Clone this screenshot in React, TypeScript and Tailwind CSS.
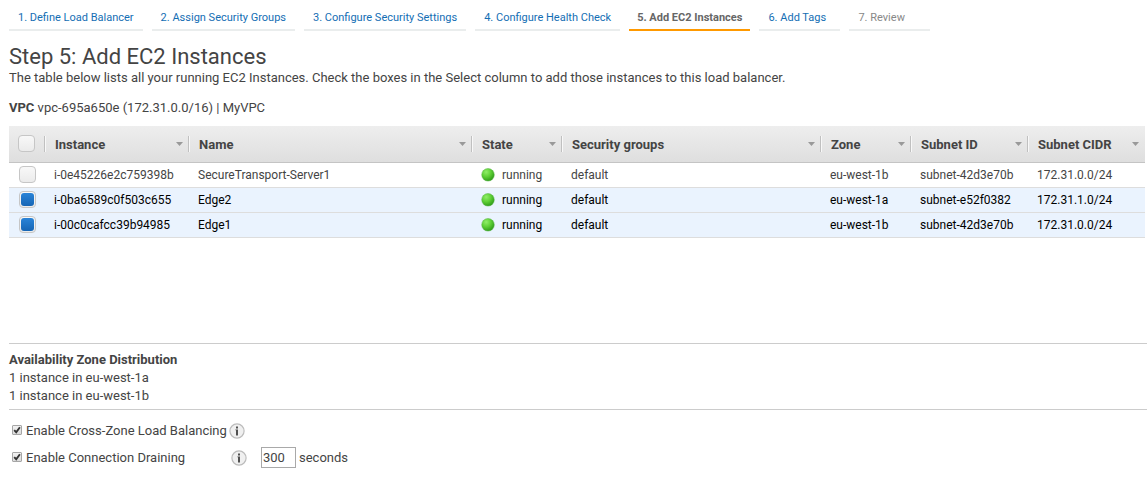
import { useId, useState } from "react";

const steps = [
  { label: "1. Define Load Balancer", state: "link" },
  { label: "2. Assign Security Groups", state: "link" },
  { label: "3. Configure Security Settings", state: "link" },
  { label: "4. Configure Health Check", state: "link" },
  { label: "5. Add EC2 Instances", state: "active" },
  { label: "6. Add Tags", state: "link" },
  { label: "7. Review", state: "pending" },
];

const stepStyles: Record<string, string> = {
  link: "border-[#eaeded] px-[9px] text-[#146eb4]",
  active: "border-[#ff9900] px-2 font-bold text-[#666666]",
  pending: "border-[#eaeded] px-[9px] text-[#888888]",
};

const columns = [
  { title: "Instance", width: "w-[144px]" },
  { title: "Name", width: "" },
  { title: "State", width: "w-[90px]" },
  { title: "Security groups", width: "w-[259px]" },
  { title: "Zone", width: "w-[90px]" },
  { title: "Subnet ID", width: "w-[117px]" },
  { title: "Subnet CIDR", width: "w-[117px]" },
];

const instances = [
  { id: "i-0e45226e2c759398b", name: "SecureTransport-Server1", zone: "eu-west-1b", subnet: "subnet-42d3e70b", cidr: "172.31.0.0/24" },
  { id: "i-0ba6589c0f503c655", name: "Edge2", zone: "eu-west-1a", subnet: "subnet-e52f0382", cidr: "172.31.1.0/24" },
  { id: "i-00c0cafcc39b94985", name: "Edge1", zone: "eu-west-1b", subnet: "subnet-42d3e70b", cidr: "172.31.0.0/24" },
];

function RowCheckbox({ label, checked, onChange }: { label: string; checked: boolean; onChange: () => void }) {
  return (
    <label className="grid size-[17px] place-items-center">
      <input
        type="checkbox"
        aria-label={label}
        checked={checked}
        onChange={onChange}
        className="peer col-start-1 row-start-1 size-[17px] appearance-none rounded border border-[#c6c6c6] bg-linear-to-b from-[#f8f8f8] to-[#ebebeb]"
      />
      <span className="pointer-events-none col-start-1 row-start-1 hidden size-[13px] rounded-[3px] bg-linear-to-b from-[#2a84d8] to-[#1565b5] peer-checked:block" />
    </label>
  );
}

function OptionCheckbox({ id }: { id: string }) {
  return (
    <span className="mb-0.5 inline-grid size-[10px] shrink-0 place-items-center">
      <input
        id={id}
        type="checkbox"
        defaultChecked
        className="peer col-start-1 row-start-1 size-[10px] appearance-none rounded-[1px] border border-[#a6a6a6] bg-linear-to-b from-[#f2f2f2] to-[#dcdcdc]"
      />
      <svg viewBox="0 0 10 10" className="pointer-events-none invisible col-start-1 row-start-1 size-[10px] peer-checked:visible" aria-hidden="true">
        <path d="M2.2 5.2L4.2 7.2L7.9 2.3" fill="none" stroke="#333" strokeWidth="1.9" />
      </svg>
    </span>
  );
}

function InfoButton({ label }: { label: string }) {
  return (
    <button type="button" aria-label={label} className="mt-px size-4 shrink-0">
      <svg viewBox="0 0 16 16" className="size-4" aria-hidden="true">
        <circle cx="8" cy="8" r="7.1" fill="#f0f0f0" stroke="#bcbcbc" strokeWidth="1.2" />
        <path d="M7 3.4h2v2H7zM6.4 6.4H9v6H7V7.2h-.6z" fill="#505050" />
      </svg>
    </button>
  );
}

function StatusDot() {
  const id = useId();
  return (
    <svg viewBox="0 0 14 14" className="size-3.5 shrink-0" aria-hidden="true">
      <defs>
        <radialGradient id={id} cx="0.36" cy="0.28" r="0.75">
          <stop offset="0" stopColor="#90ee68" />
          <stop offset="0.5" stopColor="#5fd036" />
          <stop offset="1" stopColor="#2d9a18" />
        </radialGradient>
      </defs>
      <circle cx="7" cy="6.8" r="6.3" fill={`url(#${id})`} stroke="#5bb548" strokeWidth="0.5" />
    </svg>
  );
}

export default function App() {
  const [selected, setSelected] = useState([false, true, true]);
  const all = selected.every(Boolean);

  return (
    <main className="bg-white pt-2 pl-[9px] font-[Roboto,sans-serif] text-[13px] leading-[18px] text-[#444444]">
      <nav aria-label="Wizard steps">
        <ol className="flex gap-[9px] text-[11px] leading-[19px]">
          {steps.map((step) => (
            <li key={step.label}>
              <a
                href="#"
                aria-current={step.state === "active" ? "step" : undefined}
                className={`block min-w-[81px] border-b-2 pb-0.5 whitespace-nowrap ${stepStyles[step.state]}`}
              >
                {step.label}
              </a>
            </li>
          ))}
        </ol>
      </nav>

      <h1 className="mt-[13px] text-[22px] leading-[25px]">Step 5: Add EC2 Instances</h1>
      <p>
        The table below lists all your running EC2 Instances. Check the boxes in the Select column to add those
        instances to this load balancer.
      </p>
      <p className="mt-3">
        <strong>VPC</strong> vpc-695a650e (172.31.0.0/16) | MyVPC
      </p>

      <div className="min-h-[226px] pt-[9px] pr-0.5">
        <table className="w-full table-fixed border-separate border-spacing-0 text-left text-[12px] leading-4">
          <thead>
            <tr className="h-[37px] bg-linear-to-b from-[#eeeeee] to-[#dedede]">
              <th className="w-9 border-b border-[#c4c4c4] p-0 pb-px pl-[9px]">
                <RowCheckbox label="Select all instances" checked={all} onChange={() => setSelected(selected.map(() => !all))} />
              </th>
              {columns.map((column) => (
                <th key={column.title} scope="col" className={`border-b border-[#c4c4c4] p-0 ${column.width}`}>
                  <div className="-ml-px flex h-4 items-center border-l border-[#c0c0c0] pr-1.5 shadow-[inset_1px_0_0_#f8f8f8]">
                    <span className="grow pt-0.5 pl-[10px] text-[13px] leading-[18px] font-bold">{column.title}</span>
                    <svg viewBox="0 0 7 4" className="h-1 w-[7px]" aria-hidden="true">
                      <path d="M0 0h7L3.5 4z" fill="#999" />
                    </svg>
                  </div>
                </th>
              ))}
            </tr>
          </thead>
          <tbody>
            {instances.map((row, i) => (
              <tr key={row.id} className={selected[i] ? "h-[25px] bg-[#eaf3fe] text-black" : "h-[25px]"}>
                <td className="border-b border-[#dddddd] p-0 pb-px pl-[10px]">
                  <RowCheckbox
                    label={`Select ${row.id}`}
                    checked={selected[i]}
                    onChange={() => setSelected(selected.map((value, n) => (n === i ? !value : value)))}
                  />
                </td>
                <td className="border-b border-[#dddddd] p-0 pl-[9px]">{row.id}</td>
                <td className="border-b border-[#dddddd] p-0 pl-[9px]">{row.name}</td>
                <td className="border-b border-[#dddddd] p-0 pl-[9px]">
                  <div className="flex items-center gap-[7px]">
                    <StatusDot />
                    running
                  </div>
                </td>
                <td className="border-b border-[#dddddd] p-0 pl-[9px]">default</td>
                <td className="border-b border-[#dddddd] p-0 pl-[9px]">{row.zone}</td>
                <td className="border-b border-[#dddddd] p-0 pl-[9px]">{row.subnet}</td>
                <td className="border-b border-[#dddddd] p-0 pl-[9px]">{row.cidr}</td>
              </tr>
            ))}
          </tbody>
        </table>
      </div>

      <section className="border-y border-[#cccccc] pt-[7px] pb-1">
        <h2 className="font-bold">Availability Zone Distribution</h2>
        <p>1 instance in eu-west-1a</p>
        <p>1 instance in eu-west-1b</p>
      </section>

      <form className="flex flex-col gap-1.5 pt-2.5 pl-[3px]">
        <div className="flex h-[21px] items-center">
          <OptionCheckbox id="cross-zone" />
          <label htmlFor="cross-zone" className="ml-1 w-[203px]">Enable Cross-Zone Load Balancing</label>
          <InfoButton label="About cross-zone load balancing" />
        </div>
        <div className="flex h-[21px] items-center">
          <OptionCheckbox id="draining" />
          <label htmlFor="draining" className="ml-1 w-[205px]">Enable Connection Draining</label>
          <InfoButton label="About connection draining" />
          <input
            id="timeout"
            type="text"
            defaultValue="300"
            aria-label="Draining timeout"
            className="mr-[3px] ml-[14px] h-[21px] w-[35px] border border-[#a9a9a9] px-px"
          />
          <label htmlFor="timeout">seconds</label>
        </div>
      </form>
    </main>
  );
}
